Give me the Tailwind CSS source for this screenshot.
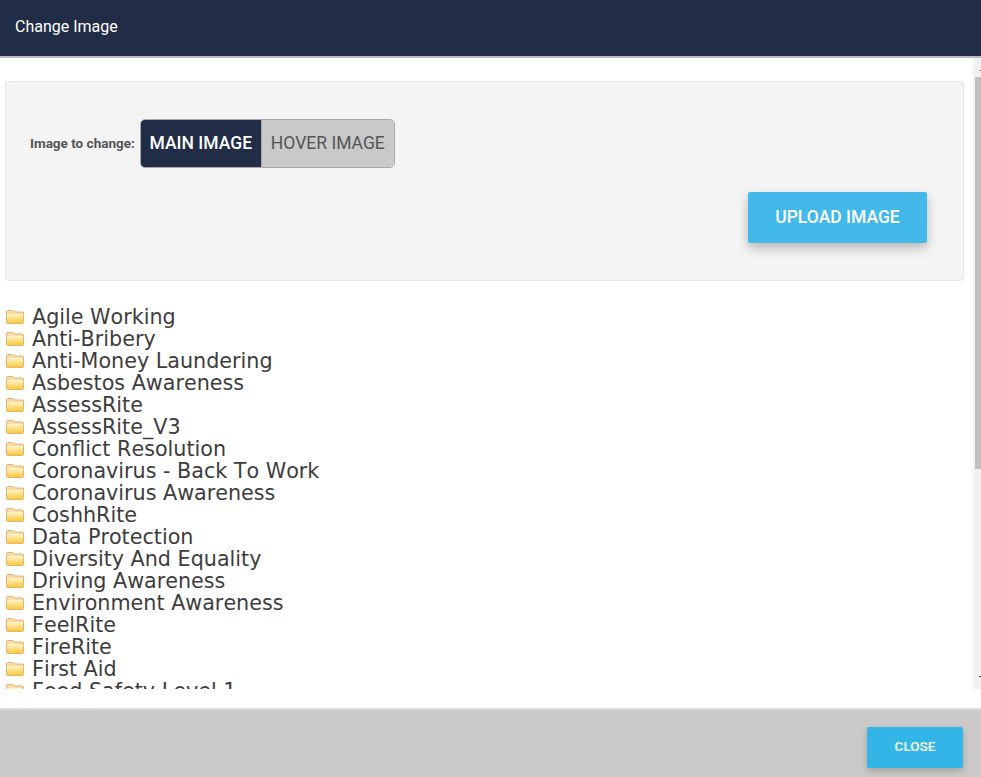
<!DOCTYPE html>
<html>
<head>
<meta charset="utf-8">
<script src="https://cdn.jsdelivr.net/npm/@tailwindcss/browser@4"></script>
<title>Change Image</title>
</head>
<body class="bg-white font-['Roboto',sans-serif]">
<svg width="0" height="0" class="absolute">
  <defs>
    <linearGradient id="fg" x1="0" y1="0" x2="0" y2="1">
      <stop offset="0" stop-color="#fff6cc"/>
      <stop offset="1" stop-color="#f7c93c"/>
    </linearGradient>
    <symbol id="folder" viewBox="0 0 18 14">
      <path d="M0.5 12.5V1.5Q0.5 0.5 1.5 0.5H7L8.5 2H16.5Q17.5 2 17.5 3V12.5Q17.5 13.5 16.5 13.5H1.5Q0.5 13.5 0.5 12.5Z" fill="#f6dca8" stroke="#e9b074"/>
      <rect x="1" y="4" width="16" height="9" fill="url(#fg)"/>
    </symbol>
  </defs>
</svg>
<div class="flex h-[777px] w-[981px] flex-col overflow-hidden">
  <header class="flex h-[58px] shrink-0 items-center border-b-2 border-[#b5bac4] bg-[#212c46] pb-[3px] pl-[15px] text-[16px] text-white">Change Image</header>
  <main class="flex h-[650px] shrink-0">
    <div class="flex h-[631px] w-[973px] shrink-0 flex-col overflow-hidden pl-[5px]">
      <section class="mt-[23px] h-[200px] w-[959px] shrink-0 rounded-[4px] border border-[#e6e6e6] bg-[#f4f4f4] pt-[37px] pr-[36px] pl-[24px]">
        <div class="flex items-center">
          <span class="mr-[5px] text-[13.5px] font-bold text-[#555]">Image to change:</span>
          <div class="flex h-[49px] overflow-hidden rounded-[5px] border border-[#a9a9a9] text-[17.5px]">
            <span class="flex w-[120px] items-center justify-center bg-[#212c46] font-medium text-white">MAIN IMAGE</span>
            <span class="flex w-[133px] items-center justify-center border-l border-[#a9a9a9] bg-[#c9c9c9] text-[#555]">HOVER IMAGE</span>
          </div>
        </div>
        <div class="mt-[24px] flex justify-end">
          <button class="h-[51px] w-[179px] rounded-[2px] bg-[#42b9ea] text-[17.5px] font-medium text-white shadow-[0_5px_11px_rgba(0,0,0,0.25)]">UPLOAD IMAGE</button>
        </div>
      </section>
      <ul class="mt-[25px] font-['DejaVu_Sans',sans-serif] text-[20.7px] leading-[22px] text-[#3d3d3d] [font-kerning:none]">
        <li class="flex h-[22px] items-center gap-[8px] pl-[1px]"><svg class="h-[14px] w-[18px] shrink-0"><use href="#folder"/></svg>Agile Working</li>
        <li class="flex h-[22px] items-center gap-[8px] pl-[1px]"><svg class="h-[14px] w-[18px] shrink-0"><use href="#folder"/></svg>Anti-Bribery</li>
        <li class="flex h-[22px] items-center gap-[8px] pl-[1px]"><svg class="h-[14px] w-[18px] shrink-0"><use href="#folder"/></svg>Anti-Money Laundering</li>
        <li class="flex h-[22px] items-center gap-[8px] pl-[1px]"><svg class="h-[14px] w-[18px] shrink-0"><use href="#folder"/></svg>Asbestos Awareness</li>
        <li class="flex h-[22px] items-center gap-[8px] pl-[1px]"><svg class="h-[14px] w-[18px] shrink-0"><use href="#folder"/></svg>AssessRite</li>
        <li class="flex h-[22px] items-center gap-[8px] pl-[1px]"><svg class="h-[14px] w-[18px] shrink-0"><use href="#folder"/></svg>AssessRite_V3</li>
        <li class="flex h-[22px] items-center gap-[8px] pl-[1px]"><svg class="h-[14px] w-[18px] shrink-0"><use href="#folder"/></svg>Conflict Resolution</li>
        <li class="flex h-[22px] items-center gap-[8px] pl-[1px]"><svg class="h-[14px] w-[18px] shrink-0"><use href="#folder"/></svg>Coronavirus - Back To Work</li>
        <li class="flex h-[22px] items-center gap-[8px] pl-[1px]"><svg class="h-[14px] w-[18px] shrink-0"><use href="#folder"/></svg>Coronavirus Awareness</li>
        <li class="flex h-[22px] items-center gap-[8px] pl-[1px]"><svg class="h-[14px] w-[18px] shrink-0"><use href="#folder"/></svg>CoshhRite</li>
        <li class="flex h-[22px] items-center gap-[8px] pl-[1px]"><svg class="h-[14px] w-[18px] shrink-0"><use href="#folder"/></svg>Data Protection</li>
        <li class="flex h-[22px] items-center gap-[8px] pl-[1px]"><svg class="h-[14px] w-[18px] shrink-0"><use href="#folder"/></svg>Diversity And Equality</li>
        <li class="flex h-[22px] items-center gap-[8px] pl-[1px]"><svg class="h-[14px] w-[18px] shrink-0"><use href="#folder"/></svg>Driving Awareness</li>
        <li class="flex h-[22px] items-center gap-[8px] pl-[1px]"><svg class="h-[14px] w-[18px] shrink-0"><use href="#folder"/></svg>Environment Awareness</li>
        <li class="flex h-[22px] items-center gap-[8px] pl-[1px]"><svg class="h-[14px] w-[18px] shrink-0"><use href="#folder"/></svg>FeelRite</li>
        <li class="flex h-[22px] items-center gap-[8px] pl-[1px]"><svg class="h-[14px] w-[18px] shrink-0"><use href="#folder"/></svg>FireRite</li>
        <li class="flex h-[22px] items-center gap-[8px] pl-[1px]"><svg class="h-[14px] w-[18px] shrink-0"><use href="#folder"/></svg>First Aid</li>
        <li class="flex h-[22px] items-center gap-[8px] pl-[1px]"><svg class="h-[14px] w-[18px] shrink-0"><use href="#folder"/></svg>Food Safety Level 1</li>
      </ul>
    </div>
    <div class="flex h-[631px] w-[8px] shrink-0 flex-col bg-[#f1f1f1] pl-[2px]">
      <div class="mt-[12px] ml-[4px] h-[1px] w-[2px] bg-[#a3a3a3]"></div>
      <div class="mt-[6px] h-[392px] w-[6px] bg-[#c1c1c1]"></div>
      <div class="mt-[207px] ml-[4px] h-[1px] w-[2px] bg-[#505050]"></div>
    </div>
  </main>
  <footer class="flex h-[69px] shrink-0 items-start justify-end border-t-2 border-[#dcdcdc] bg-[#cbcac8] pt-[17px] pr-[18px]">
    <button class="h-[41px] w-[96px] rounded-[2px] bg-[#33b5e8] pb-[2px] text-[13.5px] font-medium text-white shadow-[0_3px_7px_rgba(0,0,0,0.2)]">CLOSE</button>
  </footer>
</div>
</body>
</html>
